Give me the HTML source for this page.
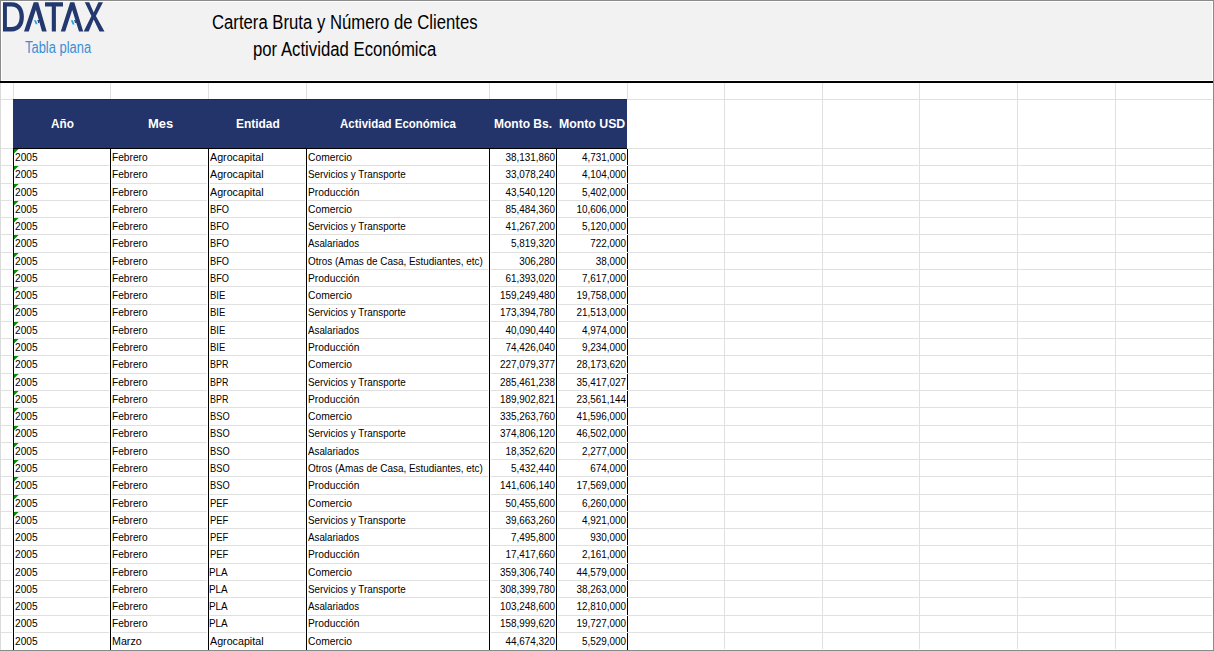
<!DOCTYPE html><html><head><meta charset="utf-8"><style>
*{margin:0;padding:0;box-sizing:border-box}
html,body{width:1214px;height:651px;overflow:hidden;background:#fff}
body{position:relative;font-family:"Liberation Sans",sans-serif}
.r{position:absolute}
.t{position:absolute;white-space:pre;line-height:12px;font-size:11px;color:#000}
.tl{transform-origin:0 0;transform:scaleX(0.9)}
.tr{transform-origin:100% 0;transform:scaleX(0.9);text-align:right}
.h{position:absolute;white-space:pre;color:#fff;font-weight:bold;font-size:12.5px;line-height:20px}
.g{position:absolute;width:5px;height:5px;background:#009000;clip-path:polygon(0 0,4.6px 0,0 4.6px)}
</style></head><body>

<div class="r" style="left:0;top:83px;width:1px;height:567px;background:#dadada"></div>
<div class="r" style="left:13px;top:83px;width:1px;height:566px;background:#e0e0e0"></div>
<div class="r" style="left:110px;top:83px;width:1px;height:566px;background:#e0e0e0"></div>
<div class="r" style="left:208px;top:83px;width:1px;height:566px;background:#e0e0e0"></div>
<div class="r" style="left:306px;top:83px;width:1px;height:566px;background:#e0e0e0"></div>
<div class="r" style="left:489px;top:83px;width:1px;height:566px;background:#e0e0e0"></div>
<div class="r" style="left:556px;top:83px;width:1px;height:566px;background:#e0e0e0"></div>
<div class="r" style="left:627px;top:83px;width:1px;height:566px;background:#e0e0e0"></div>
<div class="r" style="left:724px;top:83px;width:1px;height:566px;background:#e0e0e0"></div>
<div class="r" style="left:822px;top:83px;width:1px;height:566px;background:#e0e0e0"></div>
<div class="r" style="left:919px;top:83px;width:1px;height:566px;background:#e0e0e0"></div>
<div class="r" style="left:1017px;top:83px;width:1px;height:566px;background:#e0e0e0"></div>
<div class="r" style="left:1115px;top:83px;width:1px;height:566px;background:#e0e0e0"></div>
<div class="r" style="left:1px;top:99px;width:1211px;height:1px;background:#e0e0e0"></div>
<div class="r" style="left:1px;top:148px;width:1211px;height:1px;background:#e0e0e0"></div>
<div class="r" style="left:1px;top:165px;width:1211px;height:1px;background:#e0e0e0"></div>
<div class="r" style="left:1px;top:183px;width:1211px;height:1px;background:#e0e0e0"></div>
<div class="r" style="left:1px;top:200px;width:1211px;height:1px;background:#e0e0e0"></div>
<div class="r" style="left:1px;top:217px;width:1211px;height:1px;background:#e0e0e0"></div>
<div class="r" style="left:1px;top:234px;width:1211px;height:1px;background:#e0e0e0"></div>
<div class="r" style="left:1px;top:252px;width:1211px;height:1px;background:#e0e0e0"></div>
<div class="r" style="left:1px;top:269px;width:1211px;height:1px;background:#e0e0e0"></div>
<div class="r" style="left:1px;top:286px;width:1211px;height:1px;background:#e0e0e0"></div>
<div class="r" style="left:1px;top:304px;width:1211px;height:1px;background:#e0e0e0"></div>
<div class="r" style="left:1px;top:321px;width:1211px;height:1px;background:#e0e0e0"></div>
<div class="r" style="left:1px;top:338px;width:1211px;height:1px;background:#e0e0e0"></div>
<div class="r" style="left:1px;top:355px;width:1211px;height:1px;background:#e0e0e0"></div>
<div class="r" style="left:1px;top:373px;width:1211px;height:1px;background:#e0e0e0"></div>
<div class="r" style="left:1px;top:390px;width:1211px;height:1px;background:#e0e0e0"></div>
<div class="r" style="left:1px;top:407px;width:1211px;height:1px;background:#e0e0e0"></div>
<div class="r" style="left:1px;top:425px;width:1211px;height:1px;background:#e0e0e0"></div>
<div class="r" style="left:1px;top:442px;width:1211px;height:1px;background:#e0e0e0"></div>
<div class="r" style="left:1px;top:459px;width:1211px;height:1px;background:#e0e0e0"></div>
<div class="r" style="left:1px;top:476px;width:1211px;height:1px;background:#e0e0e0"></div>
<div class="r" style="left:1px;top:494px;width:1211px;height:1px;background:#e0e0e0"></div>
<div class="r" style="left:1px;top:511px;width:1211px;height:1px;background:#e0e0e0"></div>
<div class="r" style="left:1px;top:528px;width:1211px;height:1px;background:#e0e0e0"></div>
<div class="r" style="left:1px;top:545px;width:1211px;height:1px;background:#e0e0e0"></div>
<div class="r" style="left:1px;top:563px;width:1211px;height:1px;background:#e0e0e0"></div>
<div class="r" style="left:1px;top:580px;width:1211px;height:1px;background:#e0e0e0"></div>
<div class="r" style="left:1px;top:597px;width:1211px;height:1px;background:#e0e0e0"></div>
<div class="r" style="left:1px;top:615px;width:1211px;height:1px;background:#e0e0e0"></div>
<div class="r" style="left:1px;top:632px;width:1211px;height:1px;background:#e0e0e0"></div>
<div class="r" style="left:0;top:0;width:1214px;height:81px;background:#8a8a8a"></div>
<div class="r" style="left:1px;top:1px;width:1212px;height:80px;background:#fff"></div>
<div class="r" style="left:2px;top:2px;width:1210px;height:78px;background:#f2f2f2"></div>
<div class="r" style="left:0;top:81px;width:1213px;height:2px;background:#000"></div>
<div class="r" style="left:1213px;top:0;width:1px;height:651px;background:#8a8a8a"></div>
<div class="r" style="left:0;top:650px;width:1214px;height:1px;background:#8a8a8a"></div>
<div class="r" style="left:13px;top:99px;width:614px;height:49px;background:#223469"></div>
<div class="r" style="left:13px;top:99px;width:614px;height:1px;background:#1a2a60"></div>
<div class="r" style="left:13px;top:148px;width:614px;height:1px;background:#000"></div>
<div class="r" style="left:627px;top:100px;width:1px;height:48px;background:#fff"></div>
<div class="r" style="left:12px;top:149px;width:3px;height:501px;background:#fff"></div>
<div class="r" style="left:13px;top:148px;width:1px;height:502px;background:#000"></div>
<div class="r" style="left:109px;top:149px;width:3px;height:501px;background:#fff"></div>
<div class="r" style="left:110px;top:148px;width:1px;height:502px;background:#000"></div>
<div class="r" style="left:207px;top:149px;width:3px;height:501px;background:#fff"></div>
<div class="r" style="left:208px;top:148px;width:1px;height:502px;background:#000"></div>
<div class="r" style="left:305px;top:149px;width:3px;height:501px;background:#fff"></div>
<div class="r" style="left:306px;top:148px;width:1px;height:502px;background:#000"></div>
<div class="r" style="left:488px;top:149px;width:3px;height:501px;background:#fff"></div>
<div class="r" style="left:489px;top:148px;width:1px;height:502px;background:#000"></div>
<div class="r" style="left:555px;top:149px;width:3px;height:501px;background:#fff"></div>
<div class="r" style="left:556px;top:148px;width:1px;height:502px;background:#000"></div>
<div class="r" style="left:626px;top:149px;width:1px;height:500px;background:#fff"></div>
<div class="r" style="left:627px;top:149px;width:1px;height:16px;background:#000"></div>
<div class="r" style="left:627px;top:166px;width:1px;height:17px;background:#000"></div>
<div class="r" style="left:627px;top:184px;width:1px;height:16px;background:#000"></div>
<div class="r" style="left:627px;top:201px;width:1px;height:16px;background:#000"></div>
<div class="r" style="left:627px;top:218px;width:1px;height:16px;background:#000"></div>
<div class="r" style="left:627px;top:235px;width:1px;height:17px;background:#000"></div>
<div class="r" style="left:627px;top:253px;width:1px;height:16px;background:#000"></div>
<div class="r" style="left:627px;top:270px;width:1px;height:16px;background:#000"></div>
<div class="r" style="left:627px;top:287px;width:1px;height:17px;background:#000"></div>
<div class="r" style="left:627px;top:305px;width:1px;height:16px;background:#000"></div>
<div class="r" style="left:627px;top:322px;width:1px;height:16px;background:#000"></div>
<div class="r" style="left:627px;top:339px;width:1px;height:16px;background:#000"></div>
<div class="r" style="left:627px;top:356px;width:1px;height:17px;background:#000"></div>
<div class="r" style="left:627px;top:374px;width:1px;height:16px;background:#000"></div>
<div class="r" style="left:627px;top:391px;width:1px;height:16px;background:#000"></div>
<div class="r" style="left:627px;top:408px;width:1px;height:17px;background:#000"></div>
<div class="r" style="left:627px;top:426px;width:1px;height:16px;background:#000"></div>
<div class="r" style="left:627px;top:443px;width:1px;height:16px;background:#000"></div>
<div class="r" style="left:627px;top:460px;width:1px;height:16px;background:#000"></div>
<div class="r" style="left:627px;top:477px;width:1px;height:17px;background:#000"></div>
<div class="r" style="left:627px;top:495px;width:1px;height:16px;background:#000"></div>
<div class="r" style="left:627px;top:512px;width:1px;height:16px;background:#000"></div>
<div class="r" style="left:627px;top:529px;width:1px;height:16px;background:#000"></div>
<div class="r" style="left:627px;top:546px;width:1px;height:17px;background:#000"></div>
<div class="r" style="left:627px;top:564px;width:1px;height:16px;background:#000"></div>
<div class="r" style="left:627px;top:581px;width:1px;height:16px;background:#000"></div>
<div class="r" style="left:627px;top:598px;width:1px;height:17px;background:#000"></div>
<div class="r" style="left:627px;top:616px;width:1px;height:16px;background:#000"></div>
<div class="r" style="left:627px;top:633px;width:1px;height:16px;background:#000"></div>
<div class="r" style="left:627px;top:649px;width:1px;height:1px;background:#000"></div>
<div class="h" style="left:50.91px;top:114px;transform-origin:0 0;transform:scaleX(0.9405)">Año</div>
<div class="h" style="left:147.73px;top:114px;transform-origin:0 0;transform:scaleX(1.0362)">Mes</div>
<div class="h" style="left:236.00px;top:114px;transform-origin:0 0;transform:scaleX(0.9554)">Entidad</div>
<div class="h" style="left:340.31px;top:114px;transform-origin:0 0;transform:scaleX(0.9169)">Actividad Económica</div>
<div class="h" style="left:493.80px;top:114px;transform-origin:0 0;transform:scaleX(0.9607)">Monto Bs.</div>
<div class="h" style="left:558.88px;top:114px;transform-origin:0 0;transform:scaleX(0.9836)">Monto USD</div>
<div class="t" style="left:14.59px;top:151px;transform-origin:0 0;transform:scaleX(0.9209)">2005</div>
<div class="t" style="left:111.77px;top:151px;transform-origin:0 0;transform:scaleX(0.9232)">Febrero</div>
<div class="t" style="left:210.08px;top:151px;transform-origin:0 0;transform:scaleX(0.9728)">Agrocapital</div>
<div class="t" style="left:307.98px;top:151px;transform-origin:0 0;transform:scaleX(0.9338)">Comercio</div>
<div class="t tr" style="left:355px;width:200px;top:151px">38,131,860</div>
<div class="t tr" style="left:426px;width:200px;top:151px">4,731,000</div>
<div class="g" style="left:14px;top:149px"></div>
<div class="t" style="left:14.59px;top:168px;transform-origin:0 0;transform:scaleX(0.9209)">2005</div>
<div class="t" style="left:111.77px;top:168px;transform-origin:0 0;transform:scaleX(0.9232)">Febrero</div>
<div class="t" style="left:210.08px;top:168px;transform-origin:0 0;transform:scaleX(0.9728)">Agrocapital</div>
<div class="t" style="left:307.95px;top:168px;transform-origin:0 0;transform:scaleX(0.8973)">Servicios y Transporte</div>
<div class="t tr" style="left:355px;width:200px;top:168px">33,078,240</div>
<div class="t tr" style="left:426px;width:200px;top:168px">4,104,000</div>
<div class="g" style="left:14px;top:166px"></div>
<div class="t" style="left:14.59px;top:186px;transform-origin:0 0;transform:scaleX(0.9209)">2005</div>
<div class="t" style="left:111.77px;top:186px;transform-origin:0 0;transform:scaleX(0.9232)">Febrero</div>
<div class="t" style="left:210.08px;top:186px;transform-origin:0 0;transform:scaleX(0.9728)">Agrocapital</div>
<div class="t" style="left:307.76px;top:186px;transform-origin:0 0;transform:scaleX(0.9342)">Producción</div>
<div class="t tr" style="left:355px;width:200px;top:186px">43,540,120</div>
<div class="t tr" style="left:426px;width:200px;top:186px">5,402,000</div>
<div class="g" style="left:14px;top:184px"></div>
<div class="t" style="left:14.59px;top:203px;transform-origin:0 0;transform:scaleX(0.9209)">2005</div>
<div class="t" style="left:111.77px;top:203px;transform-origin:0 0;transform:scaleX(0.9232)">Febrero</div>
<div class="t" style="left:210.14px;top:203px;transform-origin:0 0;transform:scaleX(0.8403)">BFO</div>
<div class="t" style="left:307.98px;top:203px;transform-origin:0 0;transform:scaleX(0.9338)">Comercio</div>
<div class="t tr" style="left:355px;width:200px;top:203px">85,484,360</div>
<div class="t tr" style="left:426px;width:200px;top:203px">10,606,000</div>
<div class="g" style="left:14px;top:201px"></div>
<div class="t" style="left:14.59px;top:220px;transform-origin:0 0;transform:scaleX(0.9209)">2005</div>
<div class="t" style="left:111.77px;top:220px;transform-origin:0 0;transform:scaleX(0.9232)">Febrero</div>
<div class="t" style="left:210.14px;top:220px;transform-origin:0 0;transform:scaleX(0.8403)">BFO</div>
<div class="t" style="left:307.95px;top:220px;transform-origin:0 0;transform:scaleX(0.8973)">Servicios y Transporte</div>
<div class="t tr" style="left:355px;width:200px;top:220px">41,267,200</div>
<div class="t tr" style="left:426px;width:200px;top:220px">5,120,000</div>
<div class="g" style="left:14px;top:218px"></div>
<div class="t" style="left:14.59px;top:237px;transform-origin:0 0;transform:scaleX(0.9209)">2005</div>
<div class="t" style="left:111.77px;top:237px;transform-origin:0 0;transform:scaleX(0.9232)">Febrero</div>
<div class="t" style="left:210.14px;top:237px;transform-origin:0 0;transform:scaleX(0.8403)">BFO</div>
<div class="t" style="left:308.48px;top:237px;transform-origin:0 0;transform:scaleX(0.8886)">Asalariados</div>
<div class="t tr" style="left:355px;width:200px;top:237px">5,819,320</div>
<div class="t tr" style="left:426px;width:200px;top:237px">722,000</div>
<div class="g" style="left:14px;top:235px"></div>
<div class="t" style="left:14.59px;top:255px;transform-origin:0 0;transform:scaleX(0.9209)">2005</div>
<div class="t" style="left:111.77px;top:255px;transform-origin:0 0;transform:scaleX(0.9232)">Febrero</div>
<div class="t" style="left:210.14px;top:255px;transform-origin:0 0;transform:scaleX(0.8403)">BFO</div>
<div class="t" style="left:307.73px;top:255px;transform-origin:0 0;transform:scaleX(0.9024)">Otros (Amas de Casa, Estudiantes, etc)</div>
<div class="t tr" style="left:355px;width:200px;top:255px">306,280</div>
<div class="t tr" style="left:426px;width:200px;top:255px">38,000</div>
<div class="g" style="left:14px;top:253px"></div>
<div class="t" style="left:14.59px;top:272px;transform-origin:0 0;transform:scaleX(0.9209)">2005</div>
<div class="t" style="left:111.77px;top:272px;transform-origin:0 0;transform:scaleX(0.9232)">Febrero</div>
<div class="t" style="left:210.14px;top:272px;transform-origin:0 0;transform:scaleX(0.8403)">BFO</div>
<div class="t" style="left:307.76px;top:272px;transform-origin:0 0;transform:scaleX(0.9342)">Producción</div>
<div class="t tr" style="left:355px;width:200px;top:272px">61,393,020</div>
<div class="t tr" style="left:426px;width:200px;top:272px">7,617,000</div>
<div class="g" style="left:14px;top:270px"></div>
<div class="t" style="left:14.59px;top:289px;transform-origin:0 0;transform:scaleX(0.9209)">2005</div>
<div class="t" style="left:111.77px;top:289px;transform-origin:0 0;transform:scaleX(0.9232)">Febrero</div>
<div class="t" style="left:209.82px;top:289px;transform-origin:0 0;transform:scaleX(0.8682)">BIE</div>
<div class="t" style="left:307.98px;top:289px;transform-origin:0 0;transform:scaleX(0.9338)">Comercio</div>
<div class="t tr" style="left:355px;width:200px;top:289px">159,249,480</div>
<div class="t tr" style="left:426px;width:200px;top:289px">19,758,000</div>
<div class="g" style="left:14px;top:287px"></div>
<div class="t" style="left:14.59px;top:306px;transform-origin:0 0;transform:scaleX(0.9209)">2005</div>
<div class="t" style="left:111.77px;top:306px;transform-origin:0 0;transform:scaleX(0.9232)">Febrero</div>
<div class="t" style="left:209.82px;top:306px;transform-origin:0 0;transform:scaleX(0.8682)">BIE</div>
<div class="t" style="left:307.95px;top:306px;transform-origin:0 0;transform:scaleX(0.8973)">Servicios y Transporte</div>
<div class="t tr" style="left:355px;width:200px;top:306px">173,394,780</div>
<div class="t tr" style="left:426px;width:200px;top:306px">21,513,000</div>
<div class="g" style="left:14px;top:305px"></div>
<div class="t" style="left:14.59px;top:324px;transform-origin:0 0;transform:scaleX(0.9209)">2005</div>
<div class="t" style="left:111.77px;top:324px;transform-origin:0 0;transform:scaleX(0.9232)">Febrero</div>
<div class="t" style="left:209.82px;top:324px;transform-origin:0 0;transform:scaleX(0.8682)">BIE</div>
<div class="t" style="left:308.48px;top:324px;transform-origin:0 0;transform:scaleX(0.8886)">Asalariados</div>
<div class="t tr" style="left:355px;width:200px;top:324px">40,090,440</div>
<div class="t tr" style="left:426px;width:200px;top:324px">4,974,000</div>
<div class="g" style="left:14px;top:322px"></div>
<div class="t" style="left:14.59px;top:341px;transform-origin:0 0;transform:scaleX(0.9209)">2005</div>
<div class="t" style="left:111.77px;top:341px;transform-origin:0 0;transform:scaleX(0.9232)">Febrero</div>
<div class="t" style="left:209.82px;top:341px;transform-origin:0 0;transform:scaleX(0.8682)">BIE</div>
<div class="t" style="left:307.76px;top:341px;transform-origin:0 0;transform:scaleX(0.9342)">Producción</div>
<div class="t tr" style="left:355px;width:200px;top:341px">74,426,040</div>
<div class="t tr" style="left:426px;width:200px;top:341px">9,234,000</div>
<div class="g" style="left:14px;top:339px"></div>
<div class="t" style="left:14.59px;top:358px;transform-origin:0 0;transform:scaleX(0.9209)">2005</div>
<div class="t" style="left:111.77px;top:358px;transform-origin:0 0;transform:scaleX(0.9232)">Febrero</div>
<div class="t" style="left:209.87px;top:358px;transform-origin:0 0;transform:scaleX(0.8111)">BPR</div>
<div class="t" style="left:307.98px;top:358px;transform-origin:0 0;transform:scaleX(0.9338)">Comercio</div>
<div class="t tr" style="left:355px;width:200px;top:358px">227,079,377</div>
<div class="t tr" style="left:426px;width:200px;top:358px">28,173,620</div>
<div class="g" style="left:14px;top:356px"></div>
<div class="t" style="left:14.59px;top:376px;transform-origin:0 0;transform:scaleX(0.9209)">2005</div>
<div class="t" style="left:111.77px;top:376px;transform-origin:0 0;transform:scaleX(0.9232)">Febrero</div>
<div class="t" style="left:209.87px;top:376px;transform-origin:0 0;transform:scaleX(0.8111)">BPR</div>
<div class="t" style="left:307.95px;top:376px;transform-origin:0 0;transform:scaleX(0.8973)">Servicios y Transporte</div>
<div class="t tr" style="left:355px;width:200px;top:376px">285,461,238</div>
<div class="t tr" style="left:426px;width:200px;top:376px">35,417,027</div>
<div class="g" style="left:14px;top:374px"></div>
<div class="t" style="left:14.59px;top:393px;transform-origin:0 0;transform:scaleX(0.9209)">2005</div>
<div class="t" style="left:111.77px;top:393px;transform-origin:0 0;transform:scaleX(0.9232)">Febrero</div>
<div class="t" style="left:209.87px;top:393px;transform-origin:0 0;transform:scaleX(0.8111)">BPR</div>
<div class="t" style="left:307.76px;top:393px;transform-origin:0 0;transform:scaleX(0.9342)">Producción</div>
<div class="t tr" style="left:355px;width:200px;top:393px">189,902,821</div>
<div class="t tr" style="left:426px;width:200px;top:393px">23,561,144</div>
<div class="g" style="left:14px;top:391px"></div>
<div class="t" style="left:14.59px;top:410px;transform-origin:0 0;transform:scaleX(0.9209)">2005</div>
<div class="t" style="left:111.77px;top:410px;transform-origin:0 0;transform:scaleX(0.9232)">Febrero</div>
<div class="t" style="left:209.84px;top:410px;transform-origin:0 0;transform:scaleX(0.844)">BSO</div>
<div class="t" style="left:307.98px;top:410px;transform-origin:0 0;transform:scaleX(0.9338)">Comercio</div>
<div class="t tr" style="left:355px;width:200px;top:410px">335,263,760</div>
<div class="t tr" style="left:426px;width:200px;top:410px">41,596,000</div>
<div class="g" style="left:14px;top:408px"></div>
<div class="t" style="left:14.59px;top:427px;transform-origin:0 0;transform:scaleX(0.9209)">2005</div>
<div class="t" style="left:111.77px;top:427px;transform-origin:0 0;transform:scaleX(0.9232)">Febrero</div>
<div class="t" style="left:209.84px;top:427px;transform-origin:0 0;transform:scaleX(0.844)">BSO</div>
<div class="t" style="left:307.95px;top:427px;transform-origin:0 0;transform:scaleX(0.8973)">Servicios y Transporte</div>
<div class="t tr" style="left:355px;width:200px;top:427px">374,806,120</div>
<div class="t tr" style="left:426px;width:200px;top:427px">46,502,000</div>
<div class="g" style="left:14px;top:426px"></div>
<div class="t" style="left:14.59px;top:445px;transform-origin:0 0;transform:scaleX(0.9209)">2005</div>
<div class="t" style="left:111.77px;top:445px;transform-origin:0 0;transform:scaleX(0.9232)">Febrero</div>
<div class="t" style="left:209.84px;top:445px;transform-origin:0 0;transform:scaleX(0.844)">BSO</div>
<div class="t" style="left:308.48px;top:445px;transform-origin:0 0;transform:scaleX(0.8886)">Asalariados</div>
<div class="t tr" style="left:355px;width:200px;top:445px">18,352,620</div>
<div class="t tr" style="left:426px;width:200px;top:445px">2,277,000</div>
<div class="g" style="left:14px;top:443px"></div>
<div class="t" style="left:14.59px;top:462px;transform-origin:0 0;transform:scaleX(0.9209)">2005</div>
<div class="t" style="left:111.77px;top:462px;transform-origin:0 0;transform:scaleX(0.9232)">Febrero</div>
<div class="t" style="left:209.84px;top:462px;transform-origin:0 0;transform:scaleX(0.844)">BSO</div>
<div class="t" style="left:307.73px;top:462px;transform-origin:0 0;transform:scaleX(0.9024)">Otros (Amas de Casa, Estudiantes, etc)</div>
<div class="t tr" style="left:355px;width:200px;top:462px">5,432,440</div>
<div class="t tr" style="left:426px;width:200px;top:462px">674,000</div>
<div class="g" style="left:14px;top:460px"></div>
<div class="t" style="left:14.59px;top:479px;transform-origin:0 0;transform:scaleX(0.9209)">2005</div>
<div class="t" style="left:111.77px;top:479px;transform-origin:0 0;transform:scaleX(0.9232)">Febrero</div>
<div class="t" style="left:209.84px;top:479px;transform-origin:0 0;transform:scaleX(0.844)">BSO</div>
<div class="t" style="left:307.76px;top:479px;transform-origin:0 0;transform:scaleX(0.9342)">Producción</div>
<div class="t tr" style="left:355px;width:200px;top:479px">141,606,140</div>
<div class="t tr" style="left:426px;width:200px;top:479px">17,569,000</div>
<div class="g" style="left:14px;top:477px"></div>
<div class="t" style="left:14.59px;top:497px;transform-origin:0 0;transform:scaleX(0.9209)">2005</div>
<div class="t" style="left:111.77px;top:497px;transform-origin:0 0;transform:scaleX(0.9232)">Febrero</div>
<div class="t" style="left:209.83px;top:497px;transform-origin:0 0;transform:scaleX(0.8578)">PEF</div>
<div class="t" style="left:307.98px;top:497px;transform-origin:0 0;transform:scaleX(0.9338)">Comercio</div>
<div class="t tr" style="left:355px;width:200px;top:497px">50,455,600</div>
<div class="t tr" style="left:426px;width:200px;top:497px">6,260,000</div>
<div class="g" style="left:14px;top:495px"></div>
<div class="t" style="left:14.59px;top:514px;transform-origin:0 0;transform:scaleX(0.9209)">2005</div>
<div class="t" style="left:111.77px;top:514px;transform-origin:0 0;transform:scaleX(0.9232)">Febrero</div>
<div class="t" style="left:209.83px;top:514px;transform-origin:0 0;transform:scaleX(0.8578)">PEF</div>
<div class="t" style="left:307.95px;top:514px;transform-origin:0 0;transform:scaleX(0.8973)">Servicios y Transporte</div>
<div class="t tr" style="left:355px;width:200px;top:514px">39,663,260</div>
<div class="t tr" style="left:426px;width:200px;top:514px">4,921,000</div>
<div class="g" style="left:14px;top:512px"></div>
<div class="t" style="left:14.59px;top:531px;transform-origin:0 0;transform:scaleX(0.9209)">2005</div>
<div class="t" style="left:111.77px;top:531px;transform-origin:0 0;transform:scaleX(0.9232)">Febrero</div>
<div class="t" style="left:209.83px;top:531px;transform-origin:0 0;transform:scaleX(0.8578)">PEF</div>
<div class="t" style="left:308.48px;top:531px;transform-origin:0 0;transform:scaleX(0.8886)">Asalariados</div>
<div class="t tr" style="left:355px;width:200px;top:531px">7,495,800</div>
<div class="t tr" style="left:426px;width:200px;top:531px">930,000</div>
<div class="t" style="left:14.59px;top:548px;transform-origin:0 0;transform:scaleX(0.9209)">2005</div>
<div class="t" style="left:111.77px;top:548px;transform-origin:0 0;transform:scaleX(0.9232)">Febrero</div>
<div class="t" style="left:209.83px;top:548px;transform-origin:0 0;transform:scaleX(0.8578)">PEF</div>
<div class="t" style="left:307.76px;top:548px;transform-origin:0 0;transform:scaleX(0.9342)">Producción</div>
<div class="t tr" style="left:355px;width:200px;top:548px">17,417,660</div>
<div class="t tr" style="left:426px;width:200px;top:548px">2,161,000</div>
<div class="t" style="left:14.59px;top:566px;transform-origin:0 0;transform:scaleX(0.9209)">2005</div>
<div class="t" style="left:111.77px;top:566px;transform-origin:0 0;transform:scaleX(0.9232)">Febrero</div>
<div class="t" style="left:209.29px;top:566px;transform-origin:0 0;transform:scaleX(0.901)">PLA</div>
<div class="t" style="left:307.98px;top:566px;transform-origin:0 0;transform:scaleX(0.9338)">Comercio</div>
<div class="t tr" style="left:355px;width:200px;top:566px">359,306,740</div>
<div class="t tr" style="left:426px;width:200px;top:566px">44,579,000</div>
<div class="t" style="left:14.59px;top:583px;transform-origin:0 0;transform:scaleX(0.9209)">2005</div>
<div class="t" style="left:111.77px;top:583px;transform-origin:0 0;transform:scaleX(0.9232)">Febrero</div>
<div class="t" style="left:209.29px;top:583px;transform-origin:0 0;transform:scaleX(0.901)">PLA</div>
<div class="t" style="left:307.95px;top:583px;transform-origin:0 0;transform:scaleX(0.8973)">Servicios y Transporte</div>
<div class="t tr" style="left:355px;width:200px;top:583px">308,399,780</div>
<div class="t tr" style="left:426px;width:200px;top:583px">38,263,000</div>
<div class="t" style="left:14.59px;top:600px;transform-origin:0 0;transform:scaleX(0.9209)">2005</div>
<div class="t" style="left:111.77px;top:600px;transform-origin:0 0;transform:scaleX(0.9232)">Febrero</div>
<div class="t" style="left:209.29px;top:600px;transform-origin:0 0;transform:scaleX(0.901)">PLA</div>
<div class="t" style="left:308.48px;top:600px;transform-origin:0 0;transform:scaleX(0.8886)">Asalariados</div>
<div class="t tr" style="left:355px;width:200px;top:600px">103,248,600</div>
<div class="t tr" style="left:426px;width:200px;top:600px">12,810,000</div>
<div class="t" style="left:14.59px;top:617px;transform-origin:0 0;transform:scaleX(0.9209)">2005</div>
<div class="t" style="left:111.77px;top:617px;transform-origin:0 0;transform:scaleX(0.9232)">Febrero</div>
<div class="t" style="left:209.29px;top:617px;transform-origin:0 0;transform:scaleX(0.901)">PLA</div>
<div class="t" style="left:307.76px;top:617px;transform-origin:0 0;transform:scaleX(0.9342)">Producción</div>
<div class="t tr" style="left:355px;width:200px;top:617px">158,999,620</div>
<div class="t tr" style="left:426px;width:200px;top:617px">19,727,000</div>
<div class="t" style="left:14.59px;top:635px;transform-origin:0 0;transform:scaleX(0.9209)">2005</div>
<div class="t" style="left:111.52px;top:635px;transform-origin:0 0;transform:scaleX(0.9727)">Marzo</div>
<div class="t" style="left:210.08px;top:635px;transform-origin:0 0;transform:scaleX(0.9728)">Agrocapital</div>
<div class="t" style="left:307.98px;top:635px;transform-origin:0 0;transform:scaleX(0.9338)">Comercio</div>
<div class="t tr" style="left:355px;width:200px;top:635px">44,674,320</div>
<div class="t tr" style="left:426px;width:200px;top:635px">5,529,000</div>
<div class="r" style="left:212.45px;top:12.2px;font-size:20px;line-height:20px;color:#000;white-space:pre;transform-origin:0 0;transform:scaleX(0.8353)">Cartera Bruta y Número de Clientes</div>
<div class="r" style="left:252.52px;top:39px;font-size:20px;line-height:20px;color:#000;white-space:pre;transform-origin:0 0;transform:scaleX(0.8368)">por Actividad Económica</div>

<svg class="r" style="left:0;top:0" width="110" height="36" viewBox="0 0 110 36">
<g fill="#22386f">
<path d="M3 2.2 H11.5 C19.8 2.2 23.9 8.3 23.9 16.8 C23.9 25.4 19.8 31.5 11.5 31.5 H3 Z M6.9 6.6 V27.1 H11.5 C16.9 27.1 19.6 23 19.6 16.8 C19.6 10.7 16.9 6.6 11.5 6.6 Z"/>
<path d="M33.7 2.2 H38.2 L46.7 31.5 H42 L35.9 9.7 L28.8 31.5 H24 Z"/>
<path d="M45 2.2 H63 V6.6 H55.9 V31.5 H51.8 V6.6 H45 Z"/>
<path d="M70.2 2.2 H74.3 L83.2 31.5 H79 L72.2 10 L65.2 31.5 H60.8 Z"/>
<path d="M84.8 2.2 H89.2 L93.7 12.5 L98.4 2.2 H103 L95.9 16 L104.5 31.5 H99.5 L93.7 19.5 L88.7 31.5 H83.7 L91.4 16 Z"/>
<path d="M37.4 20 L38.8 20 L39.4 23 L38.2 23 Z"/>
<path d="M74.2 20 L75.6 20 L76.1 23 L75 23 Z"/>
</g>
<g fill="#2aa2ea">
<path d="M33.9 20.2 L35.9 20.2 L37.7 24.3 L35.7 24.3 Z"/>
<path d="M70.9 20.2 L72.9 20.2 L74.5 24.6 L72.6 24.6 Z"/>
</g>
</svg>
<div class="r" style="left:24.61px;top:37.5px;font-size:16px;line-height:20px;color:#3b8fd4;white-space:pre;transform-origin:0 0;transform:scaleX(0.8083)">Tabla plana</div>

</body></html>
